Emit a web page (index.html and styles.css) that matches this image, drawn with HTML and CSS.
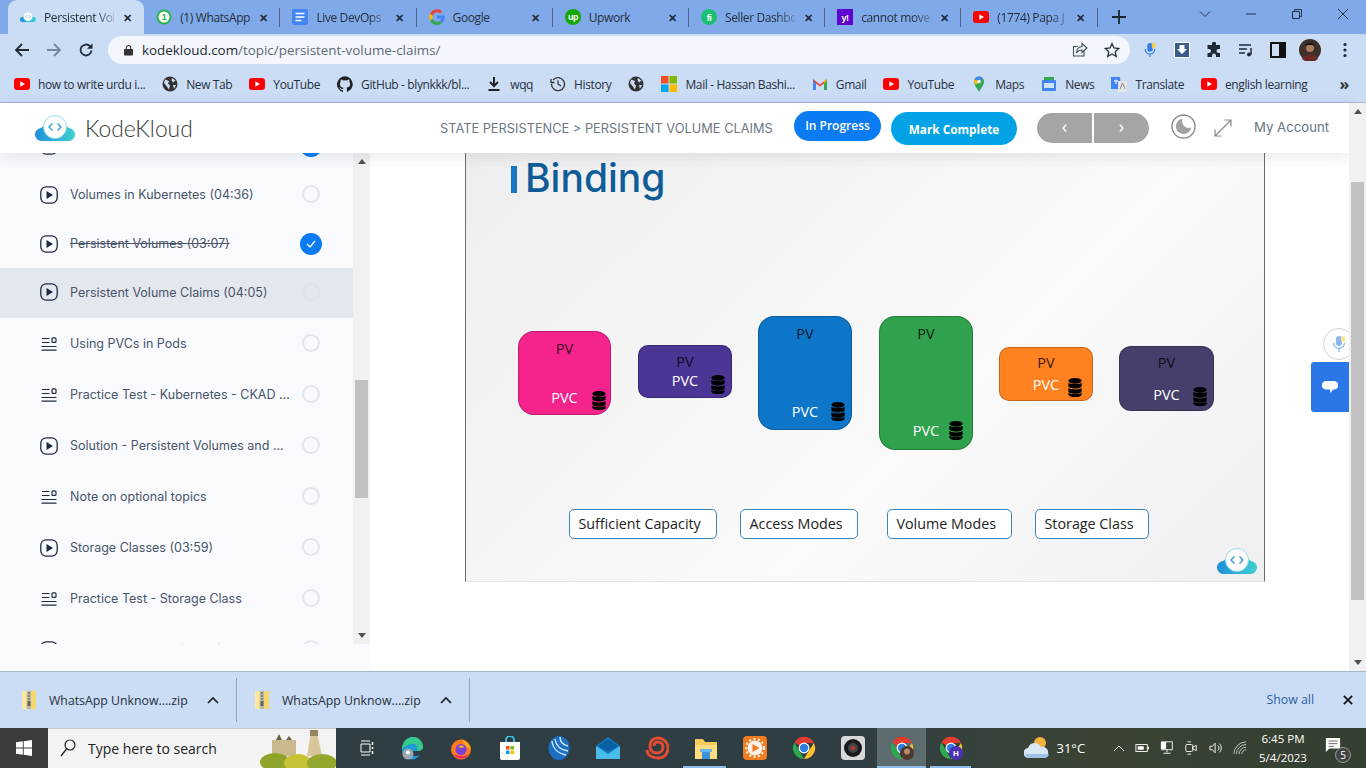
FILE: index.html
```html
<!DOCTYPE html>
<html lang="en">
<head>
<meta charset="utf-8">
<title>Persistent Volume Claims</title>
<link rel="stylesheet" href="styles.css">
</head>
<body>
<svg class="defs" width="0" height="0" aria-hidden="true">
  <defs>
    <linearGradient id="cloudg" x1="0" y1="0" x2="1" y2="0"><stop offset="0" stop-color="#1f8fd8"/><stop offset="1" stop-color="#3fd0d0"/></linearGradient>
    <symbol id="cloud" viewBox="0 0 40 26">
      <path d="M7 26a6.5 6.5 0 0 1-1-13 7 7 0 0 1 7-2 8 8 0 0 1 14 0 7 7 0 0 1 7 2 6.500 6.500 0 0 1-1 13z" fill="url(#cloudg)"/>
      <circle cx="20" cy="12" r="11.500" fill="#fff" stroke="#8fdcec" stroke-width="1"/>
      <path d="M17.500 8.500 14 12l3.500 3.500M22.500 8.500 26 12l-3.500 3.500" fill="none" stroke="#2a97d6" stroke-width="1.300"/>
    </symbol>
    <symbol id="yt" viewBox="0 0 16 16"><rect y="2" width="16" height="12" rx="3" fill="#f00"/><path d="M6.300 5.300v5.400L11 8z" fill="#fff"/></symbol>
    <symbol id="globe" viewBox="0 0 16 16"><circle cx="8" cy="8" r="7.500" fill="#333"/><path d="M3 3.500 7 5 6 7.500 8 9.500 7 13.500 4.500 10 2 7zM10 2l3.500 2.500L11 6.500 9.500 4zM11 9h3l-2 4z" fill="#cbdcf5"/></symbol>
    <symbol id="gh" viewBox="0 0 16 16"><path d="M8 .3a8 8 0 0 0-2.500 15.600c.4 0 .5-.2.500-.4v-1.400c-2.200.5-2.700-1-2.700-1-.4-.9-.9-1.200-.9-1.200-.7-.5.100-.5.100-.5.800.1 1.200.8 1.200.8.700 1.200 1.900.9 2.300.7.100-.5.300-.9.500-1.100-1.800-.2-3.600-.9-3.600-4 0-.9.300-1.600.8-2.100-.1-.2-.4-1 .1-2.100 0 0 .7-.2 2.200.8a7.600 7.600 0 0 1 4 0c1.500-1 2.200-.8 2.200-.8.400 1.100.2 1.900.1 2.100.5.600.8 1.300.8 2.100 0 3.100-1.900 3.700-3.700 3.900.3.300.5.800.5 1.500v2.200c0 .2.100.5.600.4A8 8 0 0 0 8 .3z" fill="#222"/></symbol>
    <symbol id="chrome" viewBox="0 0 24 24">
      <path d="M12 12 2.400 6.500A11 11 0 0 1 22 7H12z" fill="#e33b2e"/>
      <path d="M12 23A11 11 0 0 1 2.400 6.500L8 16z" fill="#2da94f"/>
      <path d="M22 7a11 11 0 0 1-10 16l4-7z" fill="#fbc02d"/>
      <circle cx="12" cy="12" r="5.400" fill="#fff"/><circle cx="12" cy="12" r="4.200" fill="#2f7de1"/>
    </symbol>
    <symbol id="play" viewBox="0 0 18 18"><rect x=".8" y=".8" width="16.400" height="16.400" rx="5.500" fill="none" stroke="#1e2a45" stroke-width="1.300"/><path d="M6.500 5v8L13 9z" fill="#1e2a45"/></symbol>
    <symbol id="doc" viewBox="0 0 16 14"><path d="M1 1.500h7.500M1 5.500h7.500M.5 9.500h15M.5 13.200h15" stroke="#1e2a45" stroke-width="1.200"/><rect x="11" y=".8" width="4" height="4.600" rx="1" fill="none" stroke="#1e2a45" stroke-width="1.200"/></symbol>
    <symbol id="db" viewBox="0 0 14 20"><ellipse cx="7" cy="3" rx="7" ry="3" fill="#000"/><path d="M0 5c1 1.800 13 1.800 14 0v3.500c0 3.500-14 3.500-14 0zM0 10.500c1 2 13 2 14 0V14c0 3.500-14 3.500-14 0zM0 15.500c1 2 13 2 14 0V17c0 4-14 4-14 0z" fill="#000"/></symbol>
    <symbol id="zip" viewBox="0 0 14 20"><path d="M0 1h14v18H0z" fill="#f5d76e"/><path d="M0 1h4v18H0z" fill="#f9e8a8"/><rect x="5" y="1" width="4" height="18" fill="#b9b9a8"/><path d="M6 3h2M6 6h2M6 9h2" stroke="#555"/><rect x="5.500" y="11" width="3" height="5" fill="#666"/></symbol>
    <symbol id="up" viewBox="0 0 12 8"><path d="m1 7 5-5 5 5" fill="none" stroke="#222" stroke-width="1.700"/></symbol>
  </defs>
</svg>

<div class="tabstrip">
  <div class="tab active">
    <svg class="fav" viewBox="0 0 40 26"><use href="#cloud"/></svg>
    <span class="tab-title fade">Persistent Vol</span><span class="tab-x">✕</span>
  </div>
  <div class="tab">
    <svg class="fav" viewBox="0 0 16 16"><circle cx="8" cy="8" r="7.500" fill="#25b74c"/><circle cx="8" cy="8" r="5.500" fill="#fff"/><text x="8" y="11" class="svgtxt green">1</text></svg>
    <span class="tab-title">(1) WhatsApp</span><span class="tab-x">✕</span>
  </div>
  <div class="tab">
    <svg class="fav" viewBox="0 0 16 16"><rect x="0" width="16" height="16" rx="2" fill="#4285f4"/><path d="M3.500 4.500h9M3.500 8h9M3.500 11.500h6" stroke="#fff" stroke-width="1.500"/></svg>
    <span class="tab-title fade">Live DevOps</span><span class="tab-x">✕</span>
  </div>
  <div class="tab">
    <svg class="fav" viewBox="0 0 16 16"><path d="M15.600 8.200c0-.6 0-1.100-.1-1.600H8v3h4.300a3.700 3.700 0 0 1-1.600 2.400l2.500 2c1.500-1.400 2.400-3.400 2.400-5.800z" fill="#4285f4"/><path d="M8 16c2.200 0 4-.7 5.200-2l-2.500-2c-.7.500-1.600.8-2.700.8-2 0-3.800-1.400-4.400-3.300L1 11.500A8 8 0 0 0 8 16z" fill="#34a853"/><path d="M3.600 9.500a5 5 0 0 1 0-3L1 4.500a8 8 0 0 0 0 7z" fill="#fbbc05"/><path d="M8 3.200c1.200 0 2.200.4 3 1.200l2.200-2.200A8 8 0 0 0 1 4.500l2.600 2C4.200 4.600 6 3.200 8 3.200z" fill="#ea4335"/></svg>
    <span class="tab-title">Google</span><span class="tab-x">✕</span>
  </div>
  <div class="tab">
    <svg class="fav" viewBox="0 0 16 16"><circle cx="8" cy="8" r="8" fill="#14a800"/><text x="8" y="11" class="svgtxt white">up</text></svg>
    <span class="tab-title">Upwork</span><span class="tab-x">✕</span>
  </div>
  <div class="tab">
    <svg class="fav" viewBox="0 0 16 16"><circle cx="8" cy="8" r="8" fill="#1dbf73"/><text x="8" y="12" class="svgtxt white">fi</text></svg>
    <span class="tab-title fade">Seller Dashbo</span><span class="tab-x">✕</span>
  </div>
  <div class="tab">
    <svg class="fav" viewBox="0 0 16 16"><rect width="16" height="16" fill="#5f01d1"/><text x="8" y="12" class="svgtxt white">y!</text></svg>
    <span class="tab-title fade">cannot move</span><span class="tab-x">✕</span>
  </div>
  <div class="tab">
    <svg class="fav" viewBox="0 0 16 16"><use href="#yt"/></svg>
    <span class="tab-title fade">(1774) Papa J</span><span class="tab-x">✕</span>
  </div>
  <svg class="plus" viewBox="0 0 14 14"><path d="M7 0v14M0 7h14" stroke="#1c2530" stroke-width="1.800"/></svg>
  <div class="winctl">
    <svg viewBox="0 0 12 12"><path d="m1 3.500 5 5 5-5" fill="none" stroke="#27323f"/></svg>
    <svg viewBox="0 0 12 12"><path d="M1 6h10" stroke="#27323f"/></svg>
    <svg viewBox="0 0 12 12"><path d="M1.500 3.500h7v7h-7zM3.500 3.500v-2h7v7h-2" fill="none" stroke="#27323f"/></svg>
    <svg viewBox="0 0 12 12"><path d="m1 1 10 10M11 1 1 11" stroke="#27323f"/></svg>
  </div>
</div>

<div class="toolbar">
  <svg class="nav-ic" viewBox="0 0 16 16"><path d="M15 8H2M8 2 2 8l6 6" fill="none" stroke="#202a36" stroke-width="1.800"/></svg>
  <svg class="nav-ic" viewBox="0 0 16 16"><path d="M1 8h13M8 2l6 6-6 6" fill="none" stroke="#78879b" stroke-width="1.800"/></svg>
  <svg class="nav-ic" viewBox="0 0 16 16"><path d="M13.500 8.500A5.500 5.500 0 1 1 12 4.200" fill="none" stroke="#202a36" stroke-width="1.800"/><path d="M14.500 1.200v5.500H9z" fill="#202a36"/></svg>
  <div class="omnibox">
    <svg class="lock" viewBox="0 0 10 12"><path d="M2.500 5V3.500a2.500 2.500 0 0 1 5 0V5" fill="none" stroke="#333" stroke-width="1.200"/><rect y="5" width="10" height="7" rx="1" fill="#333"/></svg>
    <span class="url"><b class="host">kodekloud.com</b>/topic/persistent-volume-claims/</span>
    <svg class="omni-ic" viewBox="0 0 16 16"><path d="M12 8.500V14H1.500V4.500H6" fill="none" stroke="#45505e" stroke-width="1.100"/><path d="M10 1.500 15 6l-5 4.500V8C7.500 8 5.500 9 4.500 11c0-3.500 2-6 5.500-6.500z" fill="none" stroke="#45505e" stroke-width="1.100"/></svg>
    <svg class="omni-ic star" viewBox="0 0 16 16"><path d="m8 1.500 2 4.500 4.800.5-3.600 3.200 1 4.800L8 12l-4.200 2.500 1-4.800L1.200 6.500 6 6z" fill="none" stroke="#27323f" stroke-width="1.300"/></svg>
  </div>
  <div class="ext">
    <svg viewBox="0 0 16 18"><rect x="5" y="1" width="6" height="10" rx="3" fill="#2f7de1"/><path d="M2.500 8a5.500 5.500 0 0 0 11 0M8 13.500V17" fill="none" stroke="#2f7de1" stroke-width="1.300"/><rect x="10" y="1.500" width="4" height="5" fill="#fbcf3a"/></svg>
    <svg viewBox="0 0 16 16"><rect x=".5" y=".5" width="15" height="15" fill="#3a5a8c" stroke="#fff"/><path d="M5.500 3h5v4H13l-5 5-5-5h2.500z" fill="#fff"/></svg>
    <svg viewBox="0 0 16 16"><path d="M6 1.500a2 2 0 0 1 4 0V3h4v4h-1.500a2 2 0 0 0 0 4H14v4h-4v-1.500a2 2 0 0 0-4 0V15H1.500v-4H3a2 2 0 0 0 0-4H1.500V3H6z" fill="#202a36"/></svg>
    <svg viewBox="0 0 16 16"><path d="M1 3h12M1 7h8M1 11h6" stroke="#202a36" stroke-width="1.500"/><path d="M13 6v6.500" stroke="#202a36" stroke-width="1.500"/><circle cx="11" cy="12.500" r="2" fill="#202a36"/></svg>
    <svg viewBox="0 0 16 16"><path d="M1 1h14v14H1z" fill="none" stroke="#111" stroke-width="2"/><rect x="9" y="1" width="6" height="14" fill="#111"/></svg>
    <svg class="avatar" viewBox="0 0 22 22"><circle cx="11" cy="11" r="11" fill="#3d3029"/><circle cx="11" cy="9" r="4" fill="#a97c60"/><path d="M6 7c1-4 9-4 10 0-3-1.500-7-1.500-10 0z" fill="#1a1412"/><path d="M3 20c2-6 14-6 16 0l-3 2H6z" fill="#6a2a26"/></svg>
    <svg class="dots" viewBox="0 0 4 16"><circle cx="2" cy="2.500" r="1.600" fill="#202a36"/><circle cx="2" cy="8" r="1.600" fill="#202a36"/><circle cx="2" cy="13.500" r="1.600" fill="#202a36"/></svg>
  </div>
</div>

<div class="bookmarks">
  <span class="bm"><svg viewBox="0 0 16 16"><use href="#yt"/></svg>how to write urdu i...</span>
  <span class="bm"><svg viewBox="0 0 16 16"><use href="#globe"/></svg>New Tab</span>
  <span class="bm"><svg viewBox="0 0 16 16"><use href="#yt"/></svg>YouTube</span>
  <span class="bm"><svg viewBox="0 0 16 16"><use href="#gh"/></svg>GitHub - blynkkk/bl...</span>
  <span class="bm"><svg viewBox="0 0 16 16"><path d="M8 1v8M4 6l4 4 4-4M2.500 14h11" fill="none" stroke="#222" stroke-width="2"/></svg>wqq</span>
  <span class="bm"><svg viewBox="0 0 16 16"><path d="M3 4a6.500 6.500 0 1 1-1.500 4M1 3v3.500h3.500M8 4.500V8l3 2" fill="none" stroke="#333" stroke-width="1.300"/></svg>History</span>
  <span class="bm"><svg viewBox="0 0 16 16"><use href="#globe"/></svg></span>
  <span class="bm"><svg viewBox="0 0 16 16"><rect width="7.500" height="7.500" fill="#f25022"/><rect x="8.500" width="7.500" height="7.500" fill="#7fba00"/><rect y="8.500" width="7.500" height="7.500" fill="#00a4ef"/><rect x="8.500" y="8.500" width="7.500" height="7.500" fill="#ffb900"/></svg>Mail - Hassan Bashi...</span>
  <span class="bm"><svg viewBox="0 0 16 16"><path d="M1 14V3l7 5.500L15 3v11h-3V7.500L8 10.500 4 7.500V14z" fill="#ea4335"/><path d="M1 14V4l3 3.500V14z" fill="#4285f4"/><path d="M15 14V4l-3 3.500V14z" fill="#34a853"/><path d="m12 7.500 3-3.500V3l-3 2z" fill="#fbbc05"/></svg>Gmail</span>
  <span class="bm"><svg viewBox="0 0 16 16"><use href="#yt"/></svg>YouTube</span>
  <span class="bm"><svg viewBox="0 0 16 16"><path d="M8 16C6 12 3 9.500 3 5.500a5 5 0 0 1 10 0C13 9.500 10 12 8 16z" fill="#34a853"/><path d="M3.500 3.500a5 5 0 0 1 8-1.500L8 5.500z" fill="#4285f4"/><path d="M3 5.500c0-.7.200-1.400.5-2L8 5.500 5 9a8 8 0 0 1-2-3.500z" fill="#fbbc05"/><circle cx="8" cy="5.500" r="1.800" fill="#fff"/></svg>Maps</span>
  <span class="bm"><svg viewBox="0 0 16 16"><rect x="1" y="4" width="14" height="11" rx="1" fill="#4285f4"/><path d="M3 4 3 1h10v3z" fill="#34a853"/><rect x="3" y="7" width="10" height="5" fill="#cfe1fb"/></svg>News</span>
  <span class="bm"><svg viewBox="0 0 16 16"><path d="M0 1h9l1 12H0z" fill="#4285f4"/><path d="M7 5h9v11H7z" fill="#e6e6e6"/><path d="M3 5h4M5 3.500V8" stroke="#fff"/><path d="m9 13 2.500-6 2.500 6" fill="none" stroke="#888"/></svg>Translate</span>
  <span class="bm"><svg viewBox="0 0 16 16"><use href="#yt"/></svg>english learning</span>
  <span class="bm-more">»</span>
</div>

<div class="page">
  <header class="site-head">
    <svg class="logo" viewBox="0 0 40 26"><use href="#cloud"/></svg>
    <span class="brand">KodeKloud</span>
    <span class="crumb">STATE PERSISTENCE &gt; PERSISTENT VOLUME CLAIMS</span>
    <span class="btn-progress">In Progress</span>
    <span class="btn-complete">Mark Complete</span>
    <span class="pager"><span class="pg">‹</span><span class="pg">›</span></span>
    <svg class="moon" viewBox="0 0 26 26"><circle cx="13" cy="13" r="12" fill="none" stroke="#8b8b8b" stroke-width="1.500"/><path d="M12 5a8 8 0 1 0 9 9A7 7 0 0 1 12 5z" fill="#a2a2a2"/></svg>
    <svg class="expand" viewBox="0 0 18 18"><path d="M10.500 1h6.500v6.500M17 1 1 17M7.500 17H1v-6.500" fill="none" stroke="#8b8b8b" stroke-width="1.200"/></svg>
    <span class="account">My Account</span>
  </header>
  <div class="content">
    <aside class="side">
      <div class="side-scroll">
        <ul class="list">
          <li class="row"><svg class="ic"><use href="#play"/></svg><span class="lbl"></span><span class="check done"></span></li>
          <li class="row"><svg class="ic"><use href="#play"/></svg><span class="lbl">Volumes in Kubernetes (04:36)</span><span class="check"></span></li>
          <li class="row"><svg class="ic"><use href="#play"/></svg><span class="lbl strike">Persistent Volumes (03:07)</span><span class="check done"><svg viewBox="0 0 10 8"><path d="m1 4 3 3 5-6" fill="none" stroke="#fff" stroke-width="1.200"/></svg></span></li>
          <li class="row current"><svg class="ic"><use href="#play"/></svg><span class="lbl">Persistent Volume Claims (04:05)</span><span class="check"></span></li>
          <li class="row tall"><svg class="ic doc"><use href="#doc"/></svg><span class="lbl">Using PVCs in Pods</span><span class="check"></span></li>
          <li class="row tall"><svg class="ic doc"><use href="#doc"/></svg><span class="lbl">Practice Test - Kubernetes - CKAD ...</span><span class="check"></span></li>
          <li class="row tall"><svg class="ic"><use href="#play"/></svg><span class="lbl">Solution - Persistent Volumes and ...</span><span class="check"></span></li>
          <li class="row tall"><svg class="ic doc"><use href="#doc"/></svg><span class="lbl">Note on optional topics</span><span class="check"></span></li>
          <li class="row tall"><svg class="ic"><use href="#play"/></svg><span class="lbl">Storage Classes (03:59)</span><span class="check"></span></li>
          <li class="row tall"><svg class="ic doc"><use href="#doc"/></svg><span class="lbl">Practice Test - Storage Class</span><span class="check"></span></li>
          <li class="row tall"><svg class="ic"><use href="#play"/></svg><span class="lbl">Why Stateful Sets (03:33)</span><span class="check"></span></li>
        </ul>
        <div class="sb-track">
          <span class="sb-up"></span>
          <span class="sb-thumb"></span>
          <span class="sb-down"></span>
        </div>
      </div>
      <div class="side-foot"></div>
    </aside>
    <main class="main">
      <section class="slide">
        <h1 class="slide-title">Binding</h1>
        <div class="pv pink"><span class="pv-l">PV</span><span class="pvc-l">PVC</span><svg class="dbi"><use href="#db"/></svg></div>
        <div class="pv purple"><span class="pv-l">PV</span><span class="pvc-l">PVC</span><svg class="dbi"><use href="#db"/></svg></div>
        <div class="pv blue"><span class="pv-l">PV</span><span class="pvc-l">PVC</span><svg class="dbi"><use href="#db"/></svg></div>
        <div class="pv green"><span class="pv-l">PV</span><span class="pvc-l">PVC</span><svg class="dbi"><use href="#db"/></svg></div>
        <div class="pv orange"><span class="pv-l">PV</span><span class="pvc-l">PVC</span><svg class="dbi"><use href="#db"/></svg></div>
        <div class="pv navy"><span class="pv-l">PV</span><span class="pvc-l">PVC</span><svg class="dbi"><use href="#db"/></svg></div>
        <span class="chip c1">Sufficient Capacity</span>
        <span class="chip c2">Access Modes</span>
        <span class="chip c3">Volume Modes</span>
        <span class="chip c4">Storage Class</span>
        <svg class="slide-logo" viewBox="0 0 40 26"><use href="#cloud"/></svg>
      </section>
      <div class="mic-float"><svg viewBox="0 0 16 18"><rect x="5" y="1" width="6" height="10" rx="3" fill="#8ab8f5"/><path d="M2.500 8a5.500 5.500 0 0 0 11 0M8 13.500V17" fill="none" stroke="#8ab8f5" stroke-width="1.300"/><rect x="10" y="1.500" width="4" height="5" fill="#fbe38a"/></svg></div>
      <div class="chat"><svg viewBox="0 0 16 14"><path d="M4 1h8a3.500 3.500 0 0 1 0 8.500h-1L8.500 13l-.5-3.500H4A3.500 3.500 0 0 1 4 1z" fill="#fff"/></svg></div>
    </main>
    <div class="page-bar">
      <span class="sb-up"></span>
      <span class="pb-thumb"></span>
      <span class="sb-down"></span>
    </div>
  </div>
</div>

<div class="shelf">
  <div class="dl"><svg class="zip"><use href="#zip"/></svg><span class="dl-name">WhatsApp Unknow....zip</span><svg class="dl-up"><use href="#up"/></svg></div>
  <div class="dl"><svg class="zip"><use href="#zip"/></svg><span class="dl-name">WhatsApp Unknow....zip</span><svg class="dl-up"><use href="#up"/></svg></div>
  <span class="showall">Show all</span>
  <svg class="shelf-x" viewBox="0 0 12 12"><path d="m1 1 10 10M11 1 1 11" stroke="#111" stroke-width="2"/></svg>
</div>

<footer class="taskbar">
  <div class="start"><svg viewBox="0 0 16 16"><path d="M0 2.300 6.800 1.300V7.500H0zM7.700 1.200 16 0v7.500H7.700zM0 8.500h6.800v6.200L0 13.700zM7.700 8.500H16V16l-8.300-1.200z" fill="#fff"/></svg></div>
  <div class="search">
    <svg class="lens" viewBox="0 0 16 18"><circle cx="10" cy="6" r="5" fill="none" stroke="#222" stroke-width="1.200"/><path d="M6.500 10 1 17" stroke="#222" stroke-width="1.300"/></svg>
    <span class="search-t">Type here to search</span>
    <svg class="doodle" viewBox="0 0 76 40"><rect x="12" y="12" width="24" height="16" fill="#c9b98c"/><path d="M16 12l3-6 3 6zM26 12l3-4 3 4z" fill="#6d6145"/><path d="M47 28l4-24h6l5 24z" fill="#d8c69a"/><rect x="50" y="2" width="8" height="6" fill="#94855f"/><ellipse cx="15" cy="34" rx="15" ry="9" fill="#8fa52a"/><ellipse cx="38" cy="35" rx="14" ry="9" fill="#c5c233"/><ellipse cx="62" cy="35" rx="15" ry="9" fill="#93a82c"/></svg>
  </div>
  <div class="apps">
    <span class="app tv"><svg viewBox="0 0 16 16"><path d="M3 1h9M3 15h9M3 4h9v8H3z" fill="none" stroke="#fff"/><path d="M14.500 2v3M14.500 7v2M14.500 11v3" stroke="#fff" stroke-width="1.600"/></svg></span>
    <span class="app"><svg viewBox="0 0 24 24"><path d="M2 14C2 6 7 1 13 1c6 0 10 5 10 10 0 3-3 4-6 4H9c0 3 3 5 6 5 2 0 4-.5 5-1.500C18 22 15 23.500 12 23.500 6 23.500 2 20 2 14z" fill="#1f9ad6"/><path d="M23 11c0 3-3 4-6 4 1-3 0-7-4-7-5 0-9 3-11 6C2 6 7 1 13 1c6 0 10 5 10 10z" fill="#36c98c"/><circle cx="8" cy="18" r="5.500" fill="#9aa7b0"/><circle cx="8" cy="16.500" r="2" fill="#fff"/></svg></span>
    <span class="app"><svg viewBox="0 0 24 24"><circle cx="12" cy="13.500" r="10" fill="#ff7a1a"/><path d="M12 1c1 3 4 3.500 6 6 2 2 3 4 3 6.500L16 9z" fill="#ffb21a"/><circle cx="12" cy="13.500" r="5.500" fill="#7a3fd6"/><path d="M4 18c4 6 13 6 16 0-3 2-6 3-8 2-3 0-6-1-8-2z" fill="#e8266e"/><path d="M9 11c2-2 5-2 6 0l-2 1z" fill="#ffb21a"/></svg></span>
    <span class="app"><svg viewBox="0 0 24 24"><path d="M8 6V4a4 4 0 0 1 8 0v2" fill="none" stroke="#3ec1e8" stroke-width="1.800"/><path d="M2 6h20v16a2 2 0 0 1-2 2H4a2 2 0 0 1-2-2z" fill="#fff"/><rect x="8" y="10" width="3.500" height="3.500" fill="#f25022"/><rect x="12.500" y="10" width="3.500" height="3.500" fill="#7fba00"/><rect x="8" y="14.500" width="3.500" height="3.500" fill="#00a4ef"/><rect x="12.500" y="14.500" width="3.500" height="3.500" fill="#ffb900"/></svg></span>
    <span class="app"><svg viewBox="0 0 24 24"><ellipse cx="12" cy="12" rx="10.500" ry="12" fill="#1c6fc4"/><path d="M5 5c1 8 5 12 14 14M8 3c1 7 5 11 13 12M13 1c0 5 3 8 8 9" fill="none" stroke="#d6ecfa" stroke-width="1.400"/></svg></span>
    <span class="app"><svg viewBox="0 0 24 24"><path d="M12 1 24 10v13H0V10z" fill="#0f7bc4"/><path d="M0 10l12 8 12-8v13H0z" fill="#49bce8"/><path d="M12 3 22 10l-10 6-10-6z" fill="#0a5f9e"/></svg></span>
    <span class="app"><svg viewBox="0 0 24 24"><path d="M2 14c0 5 5 8 11 8s10-4 10-10S18 2 13 2 5 5 5 10s3 7 7 7 6-3 6-6-2-5-5-5-4 2-4 4" fill="none" stroke="#e04b32" stroke-width="3"/></svg></span>
    <span class="app"><svg viewBox="0 0 24 24"><path d="M1 3h8l2 3h12v17H1z" fill="#f6c95a"/><path d="M1 9h22v14H1z" fill="#ffdc7d"/><rect x="8" y="15" width="8" height="8" fill="#3c8fd9"/><rect x="6" y="13" width="12" height="3" fill="#6bb4ea"/></svg></span>
    <span class="app"><svg viewBox="0 0 24 24"><rect width="24" height="24" rx="4" fill="#f27a1f"/><circle cx="12" cy="12" r="7.500" fill="#fff" opacity=".9"/><circle cx="12" cy="12" r="9" fill="none" stroke="#fff" stroke-width="2" stroke-dasharray="2 2.500"/><path d="M9.500 8v8l7-4z" fill="#f27a1f"/></svg></span>
    <span class="app"><svg viewBox="0 0 24 24"><use href="#chrome"/></svg></span>
    <span class="app"><svg viewBox="0 0 24 24"><rect width="24" height="24" rx="4" fill="#d8d8d8"/><circle cx="12" cy="12" r="9" fill="#1a1a1a"/><circle cx="12" cy="12" r="5" fill="#44464c"/><circle cx="12" cy="12" r="2" fill="#c0392b"/></svg></span>
    <span class="app run open"><svg viewBox="0 0 24 24"><use href="#chrome"/><circle cx="17" cy="17" r="7" fill="#4a3a30"/><circle cx="17" cy="15.500" r="3" fill="#b98a6c"/></svg></span>
    <span class="app open2"><svg viewBox="0 0 24 24"><use href="#chrome"/><circle cx="17" cy="17" r="7" fill="#4b2fb5"/><text x="17" y="20" class="svgtxt white small">H</text></svg></span>
  </div>
  <div class="tray">
    <svg class="wx" viewBox="0 0 26 24"><circle cx="16" cy="7" r="6" fill="#f4b13c"/><path d="M5 22a5 5 0 0 1-1-10 7 7 0 0 1 13-1 5.500 5.500 0 0 1 3 11z" fill="#d9e7f5"/><path d="M5 22a5 5 0 0 1-4-4h24a5 5 0 0 1-5 4z" fill="#9fc0e6"/></svg>
    <span class="temp">31°C</span>
    <svg class="tr t-up" viewBox="0 0 12 8"><path d="m1 7 5-5 5 5" fill="none" stroke="#fff"/></svg>
    <svg class="tr" viewBox="0 0 16 16"><rect x="1" y="4" width="13" height="8" fill="none" stroke="#fff"/><rect x="3" y="6" width="7" height="4" fill="#fff"/><rect x="14.500" y="6.500" width="1.500" height="3" fill="#fff"/></svg>
    <svg class="tr" viewBox="0 0 16 16"><rect x="2" y="1" width="12" height="9" fill="none" stroke="#fff"/><rect x="1" y="1" width="6" height="8" fill="#fff"/><path d="M8 10v3M4 14h8" stroke="#fff"/></svg>
    <svg class="tr" viewBox="0 0 16 16"><rect x="2" y="4" width="8" height="8" rx="1.500" fill="none" stroke="#fff"/><path d="m10 7 4-2v6l-4-2zM4 1h4M4 15h4" fill="none" stroke="#fff"/></svg>
    <svg class="tr" viewBox="0 0 16 16"><path d="M1 6h3l3-3.500v11L4 10H1zM10 5a4 4 0 0 1 0 6M12 3a7 7 0 0 1 0 10" fill="none" stroke="#fff"/></svg>
    <svg class="tr" viewBox="0 0 16 16"><path d="M1 15a14 14 0 0 1 14-14M4 15A11 11 0 0 1 15 4M7 15a8 8 0 0 1 8-8M10 15a5 5 0 0 1 5-5" fill="none" stroke="#cfd6d8"/></svg>
    <div class="clock"><span>6:45 PM</span><span>5/4/2023</span></div>
    <div class="notif"><svg viewBox="0 0 18 18"><path d="M1 1h16v12H5l-4 4z" fill="#fff"/><path d="M4 4.500h10M4 7.500h10M4 10.500h6" stroke="#555"/></svg><span class="badge">5</span></div>
  </div>
</footer>
</body>
</html>
```

FILE: styles.css
```css
* { box-sizing: border-box; }
html, body { margin: 0; padding: 0; }
body {
  width: 1366px;
  height: 768px;
  overflow: hidden;
  display: flex;
  flex-direction: column;
  font-family: "Open Sans", "Liberation Sans", sans-serif;
  background: #fff;
}
.defs { position: absolute; }
ul { list-style: none; margin: 0; padding: 0; }

/* tab strip */
.tabstrip {
  flex: 0 0 34px;
  display: flex;
  align-items: stretch;
  padding-left: 8px;
  background: #7fa9e8;
}
.tab {
  position: relative;
  flex: 0 0 136.2px;
  min-width: 0;
  display: flex;
  align-items: center;
  gap: 8px;
  padding: 0 12px;
  font-size: 12px;
  letter-spacing: -.38px;
  color: #26303c;
}
.tab::after {
  content: "";
  position: absolute;
  right: 0;
  top: 8px;
  height: 19px;
  width: 1px;
  background: #4d6486;
}
.tab.active { background: #cbdcf5; border-radius: 9px 9px 0 0; }
.tab.active::after { display: none; }
.fav { width: 16px; height: 16px; flex: none; }
.tab-title { flex: 1; min-width: 0; white-space: nowrap; }
.tab-title.fade {
  -webkit-mask-image: linear-gradient(90deg, #000 74%, rgba(0, 0, 0, .25) 100%);
  mask-image: linear-gradient(90deg, #000 74%, rgba(0, 0, 0, .25) 100%);
}
.tab-x { flex: none; width: 10px; font-size: 11px; font-weight: 700; color: #1f2937; text-align: center; }
.svgtxt { font-family: "Liberation Sans", sans-serif; font-weight: 700; font-size: 9px; text-anchor: middle; }
.svgtxt.green { fill: #25b74c; }
.svgtxt.white { fill: #fff; }
.svgtxt.small { font-size: 8px; }
.plus { width: 14px; height: 14px; align-self: center; margin-left: 14px; flex: none; }
.winctl { margin-left: auto; display: flex; align-items: center; padding-right: 17px; gap: 34px; height: 28px; }
.winctl svg { width: 12px; height: 12px; }

/* toolbar */
.toolbar {
  flex: 0 0 34px;
  display: flex;
  align-items: center;
  padding: 0 14px 2px 14px;
  background: #cbdcf5;
}
.nav-ic { width: 16px; height: 16px; margin-right: 16px; flex: none; }
.omnibox {
  margin-left: -2px;
  width: 1022px;
  height: 28px;
  border-radius: 14px;
  background: #f3f7fd;
  display: flex;
  align-items: center;
  padding: 0 10px 0 16px;
  flex: none;
}
.lock { width: 9px; height: 12px; margin-right: 9px; flex: none; }
.url { flex: 1; font-size: 13.4px; color: #5f6875; }
.host { font-weight: 400; color: #1f2733; }
.omni-ic { width: 16px; height: 16px; margin-left: 16px; flex: none; }
.ext { display: flex; align-items: center; margin-left: 12px; gap: 16px; }
.ext svg { width: 16px; height: 16px; flex: none; }
.ext .avatar { width: 22px; height: 22px; margin: 0 -3px; }
.ext .dots { width: 4px; height: 16px; margin-left: 9px; }

/* bookmarks */
.bookmarks {
  flex: 0 0 35px;
  display: flex;
  align-items: center;
  gap: 17px;
  padding: 0 0 2px 14px;
  background: #cbdcf5;
  border-bottom: 1px solid #a9b4c4;
  font-size: 12px;
  letter-spacing: -.38px;
  color: #27313d;
}
.bm { display: flex; align-items: center; gap: 8px; white-space: nowrap; }
.bm svg { width: 16px; height: 16px; flex: none; }
.bm-more { margin-left: auto; margin-right: 17px; font-size: 16px; font-weight: 700; color: #333; }

/* page */
.page { flex: 1; min-height: 0; display: flex; flex-direction: column; }
.site-head {
  position: relative;
  z-index: 2;
  flex: 0 0 50px;
  width: 1349px;
  display: flex;
  align-items: center;
  padding-left: 35px;
  background: #fff;
  box-shadow: 0 3px 14px rgba(40, 60, 90, .12);
}
.logo { width: 40px; height: 26px; flex: none; }
.brand { margin-left: 10px; width: 107px; font-family: "Lato", sans-serif; font-weight: 300; font-size: 22.8px; color: #3a3a3a; white-space: nowrap; }
.crumb { margin: 1px 12px 0 248px; width: 334px; font-family: "Inter", sans-serif; font-size: 12.8px; color: #6e7782; white-space: nowrap; }
.btn-progress {
  margin: -5px 0 0 8px; width: 87px; height: 30px; line-height: 29px; text-align: center;
  border-radius: 15px; background: #0a7bf2; color: #fff; font-size: 12px; font-weight: 600;
}
.btn-complete {
  margin-left: 10px; width: 126px; height: 33px; line-height: 34px; text-align: center;
  border-radius: 17px; background: #02a3e6; color: #fff; font-size: 11.8px; font-weight: 700;
}
.pager { margin: 0 0 0 20px; display: flex; gap: 2px; }
.pg { width: 55px; height: 30px; line-height: 27px; text-align: center; background: #a5a5a5; color: #fff; font-size: 18px; }
.pg:first-child { border-radius: 15px 0 0 15px; }
.pg:last-child { border-radius: 0 15px 15px 0; }
.moon { width: 25px; height: 25px; margin: -3px 0 0 22px; flex: none; }
.expand { width: 18px; height: 18px; margin: -1px 0 0 18px; flex: none; }
.account { margin: -2px 0 0 22px; font-family: "Inter", sans-serif; font-size: 13.2px; color: #6a7480; white-space: nowrap; }

.content { flex: 1; min-height: 0; display: flex; }
.side { flex: 0 0 370px; display: flex; flex-direction: column; background: #f8fafd; }
.side-scroll { flex: 0 0 491px; display: flex; overflow: hidden; }
.list { flex: 0 0 353px; margin-top: -32px; }
.row {
  height: 49px;
  display: flex;
  align-items: center;
  padding: 0 31px 0 40px;
  font-family: "Inter", sans-serif;
  font-size: 12.5px;
  color: #4a5568;
}
.row.tall { height: 51px; }
.row.current { height: 50px; padding-bottom: 2px; background: #e3e7ee; }
.ic { width: 18px; height: 18px; flex: none; }
.ic.doc { height: 14px; }
.lbl { flex: 1; min-width: 0; margin-left: 12px; white-space: nowrap; overflow: hidden; }
.strike { text-decoration: line-through; }
.check {
  flex: none;
  width: 18px;
  height: 18px;
  margin: -2px 2px 0 5px;
  border-radius: 50%;
  border: 2px solid #e2e5ea;
  display: flex;
  align-items: center;
  justify-content: center;
}
.row.current .check { border-color: #dfe2e8; margin-top: 0; }
.check.done { width: 22px; height: 22px; margin: 0 0 0 3px; border: 0; background: #0a7bf2; }
.check svg { width: 10px; height: 8px; }
.sb-track {
  flex: 0 0 17px;
  background: #f1f1f1;
  display: flex;
  flex-direction: column;
  align-items: center;
}
.sb-up, .sb-down { flex: none; width: 0; height: 0; border: 4px solid transparent; }
.sb-up { border-bottom: 5px solid #505050; border-top: 0; margin-top: 6px; }
.sb-down { border-top: 5px solid #505050; border-bottom: 0; margin-bottom: 6px; }
.sb-thumb { width: 13px; height: 118px; margin: 216px 0 auto; background: #c1c1c1; }
.side-foot { flex: 1; }

/* main + slide */
.main { flex: 1; min-width: 0; position: relative; background: #fff; padding-left: 95px; overflow: hidden; }
.slide {
  position: relative;
  width: 800px;
  height: 429px;
  border-left: 1px solid #6c6c6c;
  border-right: 1px solid #6c6c6c;
  border-bottom: 1px solid #e6e6e8;
  background: linear-gradient(135deg, #eeeeef 0%, #f7f7f8 45%, #fafafb 60%, #efeff1 100%);
  font-family: "Open Sans", sans-serif;
  overflow: hidden;
}
.slide-title {
  position: absolute;
  left: 45px;
  top: 3px;
  margin: 0;
  padding-left: 14px;
  font-family: "Inter", sans-serif;
  font-weight: 500;
  font-size: 39px;
  line-height: 44px;
  color: #0f5c99;
}
.slide-title::before {
  content: "";
  position: absolute;
  left: 0;
  top: 10px;
  width: 6px;
  height: 27px;
  background: #1478c6;
}
.pv {
  position: absolute;
  display: flex;
  flex-direction: column;
  justify-content: space-between;
  align-items: center;
  border-radius: 16px;
  font-size: 14.5px;
  line-height: 16px;
  border: 1.5px solid rgba(0, 0, 0, .22);
}
.pv-l { color: rgba(0, 0, 0, .82); }
.pvc-l { color: #fff; }
.dbi { position: absolute; width: 14px; height: 19px; }
.pink { left: 52px; top: 178px; width: 93px; height: 84px; padding: 8.5px 0; background: #f5248d; }
.pink .dbi { right: 4px; bottom: 4px; }
.purple { left: 172px; top: 192px; width: 94px; height: 53px; padding: 7.5px 0 8.5px; background: #4b3595; border-radius: 10px; }
.purple .dbi { right: 6px; bottom: 3px; }
.blue { left: 292px; top: 163px; width: 94px; height: 114px; padding: 8.5px 0 9.5px; background: #0d76c9; }
.blue .dbi { right: 6px; bottom: 8px; }
.green { left: 413px; top: 163px; width: 94px; height: 134px; padding: 8.5px 0 10.5px; background: #30a14c; }
.green .dbi { right: 9px; bottom: 9px; }
.orange { left: 533px; top: 194px; width: 94px; height: 54px; padding: 6.5px 0 7.5px; background: #ff8120; border-radius: 10px; }
.orange .dbi { right: 10px; bottom: 3px; }
.navy { left: 653px; top: 193px; width: 95px; height: 65px; padding: 7.5px 0; background: #443f6b; border-radius: 12px; }
.navy .dbi { right: 6px; bottom: 4px; }
.chip {
  position: absolute;
  top: 356px;
  height: 30px;
  line-height: 28px;
  padding-left: 8.5px;
  background: #fff;
  border: 1.5px solid #3b86bd;
  border-radius: 5px;
  font-size: 14.3px;
  color: #222;
  white-space: nowrap;
}
.c1 { left: 103px; width: 148px; }
.c2 { left: 274px; width: 118px; }
.c3 { left: 421px; width: 125px; }
.c4 { left: 569px; width: 114px; }
.slide-logo { position: absolute; left: 751px; top: 395px; width: 40px; height: 26px; }
.mic-float {
  position: absolute;
  left: 953px;
  top: 175px;
  width: 32px;
  height: 32px;
  border-radius: 50%;
  border: 1px solid #d2d2d2;
  background: #fff;
  display: flex;
  align-items: center;
  justify-content: center;
}
.mic-float svg { width: 16px; height: 18px; }
.chat {
  position: absolute;
  left: 941px;
  top: 209px;
  width: 38px;
  height: 50px;
  border-radius: 3px 0 0 3px;
  background: #2b77e8;
  display: flex;
  align-items: center;
  justify-content: center;
}
.chat svg { width: 16px; height: 14px; }
.page-bar {
  flex: 0 0 17px;
  margin-top: -50px;
  position: relative;
  z-index: 3;
  height: 568px;
  background: #f1f1f1;
  display: flex;
  flex-direction: column;
  align-items: center;
  justify-content: space-between;
}
.pb-thumb { width: 13px; height: 418px; margin-top: 68px; margin-bottom: auto; background: #c1c1c1; }

/* download shelf */
.shelf {
  flex: 0 0 57px;
  display: flex;
  align-items: center;
  background: #cbdcf5;
  border-top: 1px solid #a9b4c4;
  font-size: 12.3px;
  color: #27313d;
}
.dl {
  flex: 0 0 233px;
  height: 44px;
  display: flex;
  align-items: center;
  padding-left: 18px;
  border-right: 1px solid #98a4b6;
}
.dl:first-child { flex-basis: 237px; padding-left: 22px; }
.zip { width: 14px; height: 20px; flex: none; }
.dl-name { margin-left: 13px; width: 145px; white-space: nowrap; }
.dl-up { width: 12px; height: 8px; margin-left: 13px; flex: none; }
.showall { margin: -2px 0 0 auto; color: #2b5fa8; font-size: 12.3px; font-weight: 400; }
.shelf-x { width: 10px; height: 10px; margin: 0 13px 0 29px; flex: none; }

/* taskbar */
.taskbar {
  flex: 0 0 40px;
  display: flex;
  align-items: stretch;
  background: linear-gradient(90deg, #2f3e43 0%, #2f3e43 62%, #3b4433 80%, #333f31 100%);
  color: #fff;
}
.start { flex: 0 0 48px; background: #3c3c3c; display: flex; align-items: center; justify-content: center; }
.start svg { width: 16px; height: 16px; }
.search {
  position: relative;
  flex: 0 0 288px;
  display: flex;
  align-items: center;
  padding: 0 0 1px 12px;
  background: #f3f3f3;
  border-top: 1px solid #c9c9c9;
  overflow: hidden;
}
.lens { width: 16px; height: 18px; flex: none; }
.search-t { margin-left: 12px; font-size: 14px; color: #222; }
.doodle { position: absolute; right: 0; bottom: 0; width: 76px; height: 40px; }
.apps { display: flex; margin-left: 2px; }
.app { position: relative; flex: 0 0 49px; display: flex; align-items: center; justify-content: center; }
.app svg { width: 24px; height: 24px; }
.app.tv svg { width: 16px; height: 16px; margin-left: 7px; }
.app:nth-child(8)::after, .app.open::after, .app.open2::after {
  content: "";
  position: absolute;
  left: 0;
  right: 0;
  bottom: 0;
  height: 2px;
  background: #8cbdeb;
}
.app:nth-child(8)::after { left: 2px; right: 4px; }
.app.open2::after { left: 4px; right: 4px; }
.app.run { background: #5c6c6f; }
.tray { margin-left: auto; display: flex; align-items: center; padding-right: 17px; }
.wx { width: 26px; height: 24px; flex: none; }
.temp { margin: 0 0 0 7px; width: 32px; font-size: 13px; }
.tr { width: 14px; height: 14px; margin-left: 10.5px; flex: none; }
.t-up { width: 12px; height: 8px; margin-left: 24px; }
.clock { margin-left: 5px; width: 62px; display: flex; flex-direction: column; align-items: center; font-size: 11.5px; line-height: 19px; }
.notif { position: relative; margin-left: 11px; width: 24px; height: 24px; }
.notif svg { width: 16px; height: 18px; }
.badge {
  position: absolute;
  right: -2px;
  bottom: -3px;
  width: 16px;
  height: 16px;
  line-height: 14px;
  text-align: center;
  font-size: 10px;
  border-radius: 50%;
  background: #444;
  border: 1px solid #999;
}
```
